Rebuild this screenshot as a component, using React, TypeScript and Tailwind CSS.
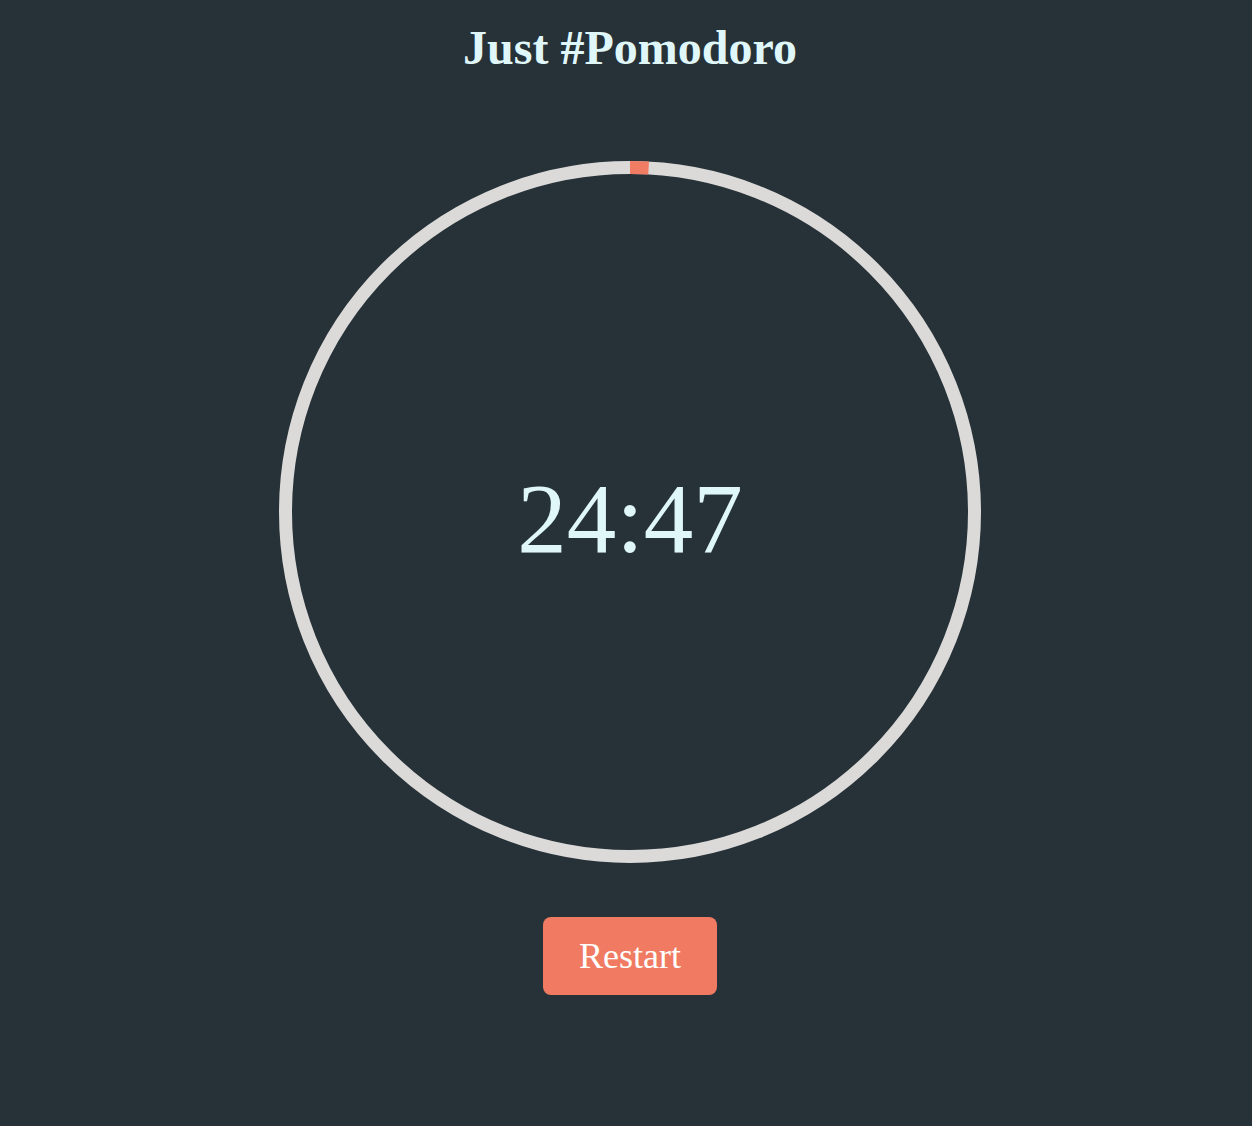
import React from "react";

const TOTAL = 25 * 60;
const LEFT = 24 * 60 + 47;

const Ring = ({ left, total }: { left: number; total: number }) => {
  const r = 344.5;
  const c = 2 * Math.PI * r;
  const done = ((total - left) / total) * c;
  return (
    <svg width="702" height="702" viewBox="0 0 702 702" className="block">
      <circle cx="351" cy="351" r={r} fill="none" stroke="#dcdad9" strokeWidth="13" />
      <circle
        cx="351"
        cy="351"
        r={r}
        fill="none"
        stroke="#f07c64"
        strokeWidth="13"
        strokeDasharray={`${done} ${c}`}
        transform="rotate(-90 351 351)"
      />
    </svg>
  );
};

const App = () => {
  const mm = String(Math.floor(LEFT / 60)).padStart(2, "0");
  const ss = String(LEFT % 60).padStart(2, "0");
  return (
    <div
      className="w-full min-h-[1126px] bg-[#263238] flex flex-col items-center pl-[8px] pt-[20px]"
      style={{ fontFamily: '"Liberation Serif", "Times New Roman", serif' }}
    >
      <h1 className="text-[48px] leading-[56px] font-bold text-[#e0f7fa]">Just #Pomodoro</h1>
      <div className="relative mt-[85px]">
        <Ring left={LEFT} total={TOTAL} />
        <div className="absolute inset-0 flex items-center justify-center pt-[12px]">
          <span className="text-[99px] leading-none text-[#e0f7fa]">
            {mm}:{ss}
          </span>
        </div>
      </div>
      <button className="mt-[54px] w-[174px] h-[78px] rounded-[8px] bg-[#f07b62] text-white text-[36px] leading-none">
        Restart
      </button>
    </div>
  );
};

export default App;
